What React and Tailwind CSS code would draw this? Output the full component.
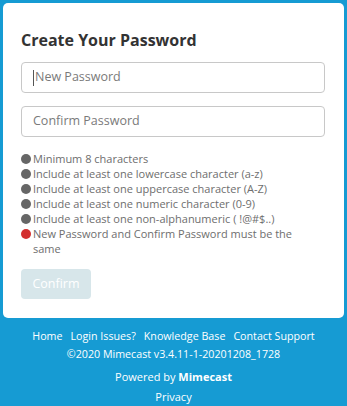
import React from "react";

const rules = [
  { t: "Minimum 8 characters", red: false },
  { t: "Include at least one lowercase character (a-z)", red: false },
  { t: "Include at least one uppercase character (A-Z)", red: false },
  { t: "Include at least one numeric character (0-9)", red: false },
  { t: "Include at least one non-alphanumeric ( !@#$..)", red: false },
  { t: "New Password and Confirm Password must be the same", red: true },
];

export default function App() {
  return (
    <div
      className="w-[347px] h-[406px] bg-[#169bd3] overflow-hidden pt-[3px] px-[3px]"
      style={{ fontFamily: '"Open Sans", sans-serif' }}
    >
      <div className="bg-white rounded-[5px] h-[315px] pt-[27px] pl-[18px] pr-[19px]">
        <h1 className="text-[16px] leading-[20px] font-bold text-[#333]">Create Your Password</h1>
        <div className="mt-[12px] h-[31px] border border-[#c8c8c8] rounded-[4px] flex items-center pl-[11px] text-[12.5px] text-[#7a7a7a]">
          <span className="w-px h-[16px] bg-[#555] mr-px"></span>New Password
        </div>
        <div className="mt-[13px] h-[31px] border border-[#c8c8c8] rounded-[4px] flex items-center pl-[11px] text-[12.5px] text-[#7a7a7a]">
          Confirm Password
        </div>
        <ul className="mt-[14px] text-[11px] leading-[15px] text-[#6e6e6e] w-[285px]">
          {rules.map((r, i) => (
            <li key={i} className="flex items-start">
              <span
                className={
                  "mt-[2.5px] w-[10px] h-[10px] rounded-full shrink-0 mr-[2px] " +
                  (r.red ? "bg-[#d32f2f]" : "bg-[#666]")
                }
              ></span>
              <span>{r.t}</span>
            </li>
          ))}
        </ul>
        <button className="mt-[13px] w-[70px] h-[30px] rounded-[4px] bg-[#d7e6ea] text-white text-[12.5px]">
          Confirm
        </button>
      </div>
      <div className="text-white text-center">
        <div className="mt-[9px] text-[10.7px] leading-[18px] flex justify-center gap-[8px]">
          <span>Home</span>
          <span>Login Issues?</span>
          <span>Knowledge Base</span>
          <span>Contact Support</span>
        </div>
        <div className="text-[10.7px] leading-[18px]">©2020 Mimecast v3.4.11-1-20201208_1728</div>
        <div className="mt-[5px] text-[11px] leading-[18px]">
          Powered by <span className="font-bold">Mimecast</span>
        </div>
        <div className="mt-[2px] text-[11px] leading-[18px]">Privacy</div>
      </div>
    </div>
  );
}
